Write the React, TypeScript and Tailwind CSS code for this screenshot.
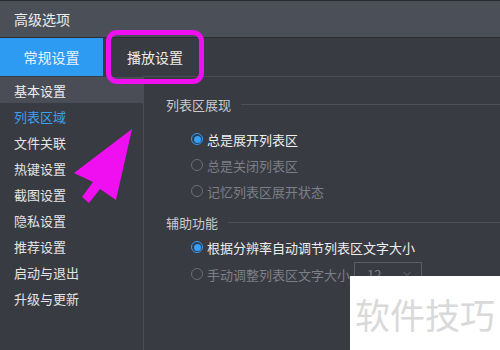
import { ChevronDown } from 'lucide-react';

const sideItems = ['基本设置', '列表区域', '文件关联', '热键设置', '截图设置', '隐私设置', '推荐设置', '启动与退出', '升级与更新'];

function Radio({ checked, label }: { checked?: boolean; label: string }) {
  return (
    <div className="flex items-center h-full">
      {checked ? (
        <span className="w-[12px] h-[12px] rounded-full border border-[#3b9cf0] flex items-center justify-center bg-[#2b3e55]">
          <span className="w-[7px] h-[7px] rounded-full bg-[#3aa0f5]" />
        </span>
      ) : (
        <span className="w-[12px] h-[12px] rounded-full border border-[#6b6e75]" />
      )}
      <span className={`ml-[4px] text-[13px] ${checked ? 'text-[#eeeeee]' : 'text-[#7c7f86]'}`}>{label}</span>
    </div>
  );
}

function SectionTitle({ text }: { text: string }) {
  return (
    <div className="flex items-center h-[18px] pl-[22px]">
      <span className="text-[13px] text-[#c9cacc]">{text}</span>
      <div className="flex-1 h-px bg-[#4d5057] ml-[10px]" />
    </div>
  );
}

export default function App() {
  return (
    <div className="relative w-[500px] h-[350px] overflow-hidden bg-[#393b42] font-['Noto_Sans_CJK_SC',sans-serif] leading-none">
      {/* title bar */}
      <div className="h-[38px] bg-[#4b5058] border-t border-[#2a2c31] border-b border-b-[#2c2e34] flex items-center pl-[14px]">
        <span className="text-[14px] text-[#ececec]">高级选项</span>
      </div>

      {/* tabs */}
      <div className="h-[38px] flex">
        <div className="w-[103px] bg-[#2e9bf3] flex items-center justify-center text-[14px] text-[#e8f4ff]">常规设置</div>
        <div className="w-[100px] flex items-center justify-center text-[14px] text-[#ececec] pl-[4px]">播放设置</div>
      </div>

      <div className="flex h-[274px]">
        {/* sidebar */}
        <div className="w-[144px] border-r border-[#4a4d55] pt-px">
          {sideItems.map((s, i) => (
            <div
              key={s}
              className={`h-[26px] flex items-center pl-[14px] text-[13px] ${i === 0 ? 'bg-[#4a4d55] text-[#eeeeee]' : i === 1 ? 'text-[#3d9ff0]' : 'text-[#e4e4e4]'}`}
            >
              {s}
            </div>
          ))}
        </div>

        {/* content */}
        <div className="flex-1 border-t border-[#4a4d54]">
          <div className="mt-[18px]">
            <SectionTitle text="列表区展现" />
          </div>
          <div className="mt-[13px] pl-[47px]">
            <div className="h-[26px]"><Radio checked label="总是展开列表区" /></div>
            <div className="h-[26px]"><Radio label="总是关闭列表区" /></div>
            <div className="h-[26px]"><Radio label="记忆列表区展开状态" /></div>
          </div>
          <div className="mt-[9px]">
            <SectionTitle text="辅助功能" />
          </div>
          <div className="mt-[3px] pl-[47px]">
            <div className="h-[26px]"><Radio checked label="根据分辨率自动调节列表区文字大小" /></div>
            <div className="h-[28px] flex items-center">
              <Radio label="手动调整列表区文字大小" />
              <div className="ml-[4px] w-[68px] h-[24px] border border-[#5a5d64] flex items-center justify-between pl-[12px] pr-[8px] text-[13px] text-[#7c7f86]">
                <span>12</span>
                <ChevronDown size={12} strokeWidth={1.5} className="text-[#7c7f86]" />
              </div>
            </div>
          </div>
        </div>
      </div>

      {/* magenta highlight box */}
      <div className="absolute left-[106px] top-[30px] w-[98px] h-[54px] rounded-[11px] border-[5px] border-[#f00ff0]" />

      {/* magenta arrow */}
      <svg className="absolute left-0 top-0" width="500" height="350">
        <polygon points="132,129 74,173 93,182 82,197 89,203 100,189 116,200" fill="#f00ff0" />
      </svg>

      {/* watermark */}
      <div className="absolute left-[350px] top-[276px] w-[150px] h-[74px] bg-white flex items-center justify-center">
        <span className="text-[35px] text-[#d9d9d9]">软件技巧</span>
      </div>
    </div>
  );
}
